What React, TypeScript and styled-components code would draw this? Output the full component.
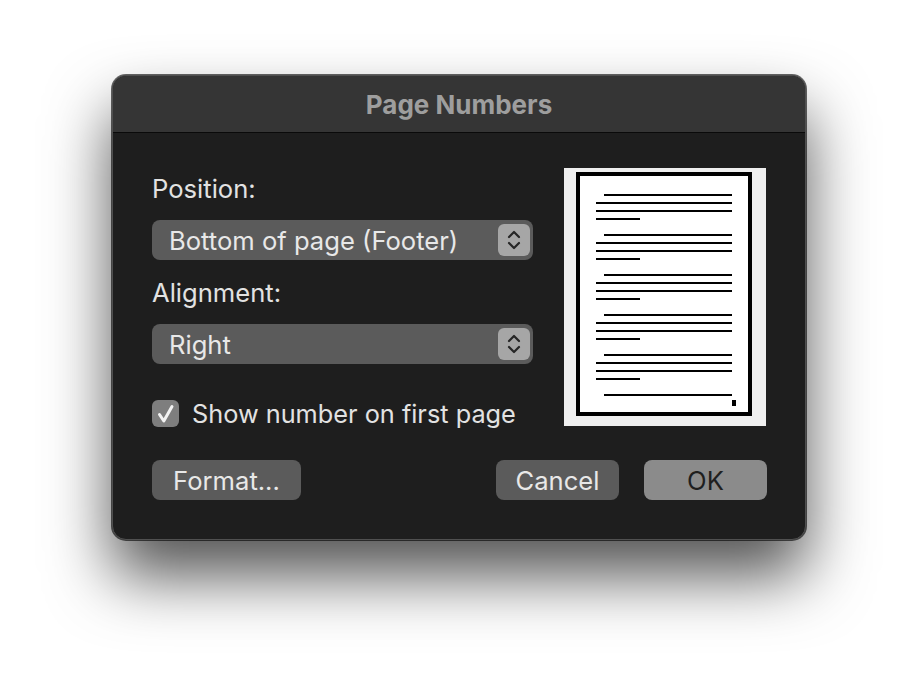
import React, { FC } from 'react';
import styled, { createGlobalStyle } from 'styled-components';

const GlobalStyle = createGlobalStyle`
  html, body {
    margin: 0;
    padding: 0;
    background: #ffffff;
  }
  body {
    font-family: Inter, "Liberation Sans", sans-serif;
    -webkit-font-smoothing: antialiased;
  }
`;

const Stage = styled.div`
  padding: 75px 0 0 112px;
  height: 688px;
  box-sizing: border-box;
`;

const Window = styled.div`
  width: 694px;
  height: 465px;
  box-sizing: border-box;
  border-radius: 14px;
  background: #1e1e1e;
  overflow: hidden;
  border: 1px solid #505050;
  box-shadow: 0 0 0 1px rgba(0, 0, 0, 0.6), 0 36px 64px rgba(0, 0, 0, 0.68);
  display: flex;
  flex-direction: column;
`;

const TitleBar = styled.div`
  height: 56px;
  flex-shrink: 0;
  background: #353535;
  border-bottom: 1px solid #0a0a0a;
  display: flex;
  align-items: center;
  justify-content: center;
  color: #9e9e9e;
  font-size: 26px;
  font-weight: 700;
`;

const Body = styled.div`
  padding: 35px 38px 0 39px;
  display: flex;
  flex-direction: column;
`;

const TopRow = styled.div`
  display: flex;
  gap: 31px;
`;

const Controls = styled.div`
  width: 381px;
  display: flex;
  flex-direction: column;
`;

const Label = styled.div<{ $top: number }>`
  margin-top: ${(p) => p.$top}px;
  color: #e2e2e2;
  font-size: 25.6px;
  line-height: 30px;
`;

const Select = styled.div`
  margin-top: 16px;
  height: 40px;
  border-radius: 8px;
  background: #5b5b5b;
  display: flex;
  align-items: center;
  justify-content: space-between;
  padding: 0 3px 0 17px;
  color: #e8e8e8;
  font-size: 25.6px;
`;

const Stepper = styled.div`
  width: 32px;
  height: 32px;
  border-radius: 6px;
  background: #a6a6a6;
  display: flex;
  align-items: center;
  justify-content: center;
`;

const CheckRow = styled.label`
  margin-top: 36px;
  display: flex;
  align-items: center;
  gap: 13px;
  color: #e2e2e2;
  font-size: 25.3px;
  height: 27px;
`;

const CheckBox = styled.span`
  width: 27px;
  height: 27px;
  border-radius: 6px;
  background: #7e7e7e;
  display: flex;
  align-items: center;
  justify-content: center;
`;

const Preview = styled.div`
  width: 202px;
  height: 258px;
  background: #efefef;
`;

const ButtonRow = styled.div`
  margin-top: 33px;
  display: flex;
  align-items: center;
  gap: 25px;
`;

const Button = styled.button<{ $primary?: boolean; $width: number }>`
  width: ${(p) => p.$width}px;
  height: 40px;
  border: none;
  border-radius: 8px;
  background: ${(p) => (p.$primary ? '#8b8b8b' : '#5b5b5b')};
  color: ${(p) => (p.$primary ? '#1f1f1f' : '#e8e8e8')};
  font-family: inherit;
  font-size: 25.6px;
  padding: 0;
`;

const Spacer = styled.div`
  flex: 1;
`;

const StepperIcon: FC = () => (
  <svg width="18" height="24" viewBox="0 0 18 24">
    <path
      d="M4 9 L9 4 L14 9 M4 15 L9 20 L14 15"
      fill="none"
      stroke="#262626"
      strokeWidth="2.2"
      strokeLinecap="round"
      strokeLinejoin="round"
    />
  </svg>
);

const CheckIcon: FC = () => (
  <svg width="22" height="22" viewBox="0 0 22 22">
    <path
      d="M4.5 11.5 L8.8 18 L17 3.5"
      fill="none"
      stroke="#f2f2f2"
      strokeWidth="3"
      strokeLinecap="round"
      strokeLinejoin="round"
    />
  </svg>
);

const PagePreview: FC = () => {
  const paragraphs = [27, 67, 107, 147, 187];
  return (
    <Preview>
      <svg width="202" height="258" viewBox="0 0 202 258">
        <rect x="14" y="6" width="172" height="240" fill="#fff" stroke="#000" strokeWidth="4" />
        {paragraphs.map((y) => (
          <g key={y} fill="#000">
            <rect x="40" y={y - 1} width="128" height="2" />
            <rect x="32" y={y + 7} width="136" height="2" />
            <rect x="32" y={y + 15} width="136" height="2" />
            <rect x="32" y={y + 23} width="44" height="2" />
          </g>
        ))}
        <rect x="40" y="226" width="128" height="2" fill="#000" />
        <rect x="168" y="232" width="4" height="6" fill="#000" />
      </svg>
    </Preview>
  );
};

const App: FC = () => {
  return (
    <Stage>
      <GlobalStyle />
      <Window>
        <TitleBar>Page Numbers</TitleBar>
        <Body>
          <TopRow>
            <Controls>
              <Label $top={6}>Position:</Label>
              <Select>
                <span>Bottom of page (Footer)</span>
                <Stepper>
                  <StepperIcon />
                </Stepper>
              </Select>
              <Label $top={18}>Alignment:</Label>
              <Select>
                <span>Right</span>
                <Stepper>
                  <StepperIcon />
                </Stepper>
              </Select>
              <CheckRow>
                <CheckBox>
                  <CheckIcon />
                </CheckBox>
                Show number on first page
              </CheckRow>
            </Controls>
            <PagePreview />
          </TopRow>
          <ButtonRow>
            <Button $width={149}>Format...</Button>
            <Spacer />
            <Button $width={123}>Cancel</Button>
            <Button $width={123} $primary>
              OK
            </Button>
          </ButtonRow>
        </Body>
      </Window>
    </Stage>
  );
};

export default App;
